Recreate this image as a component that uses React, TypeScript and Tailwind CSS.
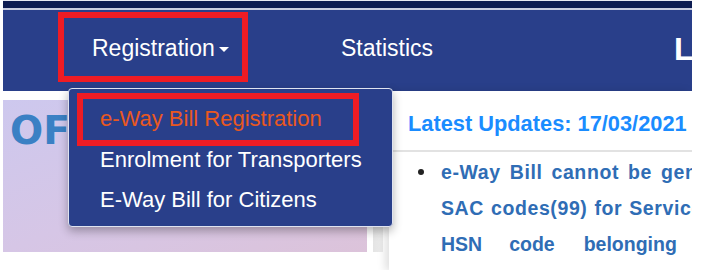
export default function App() {
  const font = { fontFamily: '"Liberation Sans", Arial, sans-serif' };
  return (
    <div className="relative w-[719px] h-[270px] overflow-hidden bg-white" style={font}>
      <div className="ml-[3px] w-[689px] overflow-hidden">
        {/* top nav */}
        <div className="h-[1px] bg-[#e8eaf2]" />
        <div className="h-[7px] bg-[#0d1c52]" />
        <div className="h-[2px] bg-[#c9cde0]" />
        <div className="flex items-start h-[81px] bg-[#293f8a] pt-[2px] overflow-hidden">
          <div className="ml-[55px] shrink-0 w-[190px] h-[70px] border-[6px] border-[#ee1c24] flex items-center pl-[28px] pt-[2px]">
            <span className="text-[23px] text-white">Registration</span>
            <span className="ml-[4px] mt-[2px] w-0 h-0 border-l-[5px] border-r-[5px] border-t-[5px] border-l-transparent border-r-transparent border-t-white" />
          </div>
          <div className="ml-[93px] shrink-0 h-[70px] flex items-center pt-[2px]">
            <span className="text-[23px] text-white">Statistics</span>
          </div>
          <div className="ml-[241px] shrink-0 h-[70px] flex items-center pt-[4px]">
            <span className="text-[32px] font-bold text-white">L</span>
          </div>
        </div>

        {/* content */}
        <div className="flex">
          <div className="mt-[9px] shrink-0 w-[364px] h-[152px] bg-gradient-to-br from-[#cdc8ee] via-[#d6c6e6] to-[#dcc3da] pl-[7px] pt-[11px]">
            <span className="text-[39px] leading-none text-[#3a80c4]" style={{ fontFamily: '"DejaVu Sans", sans-serif', fontWeight: 900 }}>
              OF
            </span>
          </div>
          <div className="ml-[6px] mt-[4px] shrink-0 w-[10px] h-[157px] bg-gradient-to-r from-[#e4e4e4] to-[#ececec]" />
          <div className="ml-[6px] flex-1 min-w-0 h-[180px] bg-white shadow-[-4px_0_8px_rgba(0,0,0,0.12)] overflow-hidden">
            <div className="h-[61px] pl-[19px] pt-[17px] border-b-2 border-[#e2e2e2]">
              <span className="text-[21.8px] font-bold text-[#1a8cff] whitespace-nowrap">Latest Updates: 17/03/2021</span>
            </div>
            <div className="flex pl-[29px] pt-[2px] text-[19.5px] font-bold text-[#2f6db5] leading-[36px]">
              <span className="mt-[15px] w-[6px] h-[6px] rounded-full bg-[#222] shrink-0" />
              <div className="ml-[17px]">
                <div className="whitespace-nowrap tracking-[0.6px] [word-spacing:3px]">e-Way Bill cannot be generated</div>
                <div className="whitespace-nowrap tracking-[0.6px] [word-spacing:1px]">SAC codes(99) for Services</div>
                <div className="flex whitespace-nowrap">
                  <span>HSN</span>
                  <span className="ml-[27px]">code</span>
                  <span className="ml-[29px]">belonging</span>
                </div>
              </div>
            </div>
          </div>
        </div>
      </div>

      {/* dropdown */}
      <div className="absolute left-[68px] top-[88px] w-[325px] h-[139px] bg-[#293f8a] rounded-[4px] border border-[#dfe3f0] shadow-[0_4px_10px_rgba(0,0,0,0.3)] pt-[4px] pl-[8px]">
        <div className="w-[282px] h-[53px] border-[6px] border-[#ee1c24] flex items-center pl-[17px] pb-[2px]">
          <span className="text-[22px] text-[#e9581f] whitespace-nowrap">e-Way Bill Registration</span>
        </div>
        <div className="pl-[23px] -mt-[6px] text-[22px] text-white leading-[40px] whitespace-nowrap">
          <div>Enrolment for Transporters</div>
          <div>E-Way Bill for Citizens</div>
        </div>
      </div>
    </div>
  );
}
